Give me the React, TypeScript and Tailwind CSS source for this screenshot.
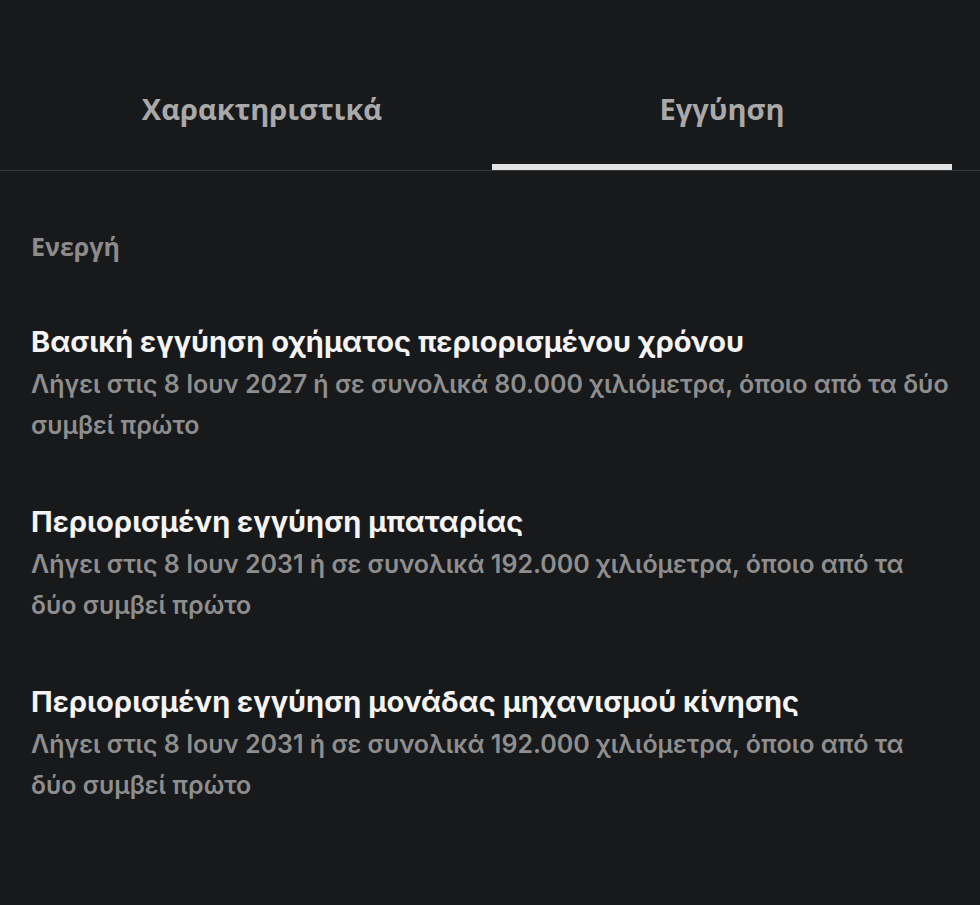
const items = [
  {
    title: 'Βασική εγγύηση οχήματος περιορισμένου χρόνου',
    detail: 'Λήγει στις 8 Ιουν 2027 ή σε συνολικά 80.000 χιλιόμετρα, όποιο από τα δύο συμβεί πρώτο',
  },
  {
    title: 'Περιορισμένη εγγύηση μπαταρίας',
    detail: 'Λήγει στις 8 Ιουν 2031 ή σε συνολικά 192.000 χιλιόμετρα, όποιο από τα δύο συμβεί πρώτο',
  },
  {
    title: 'Περιορισμένη εγγύηση μονάδας μηχανισμού κίνησης',
    detail: 'Λήγει στις 8 Ιουν 2031 ή σε συνολικά 192.000 χιλιόμετρα, όποιο από τα δύο συμβεί πρώτο',
  },
]

const tabs = [
  { label: 'Χαρακτηριστικά', active: false },
  { label: 'Εγγύηση', active: true },
]

export default function App() {
  return (
    <div className="min-h-[905px] w-full bg-[#18191b] font-['Inter',sans-serif]">
      <div className="border-b border-[#37383a] pl-[32px] pt-[40px]">
        <div className="flex">
          {tabs.map(tab => (
            <div
              key={tab.label}
              className={`flex h-[130px] w-[460px] items-center justify-center border-b-[6px] pt-[14px] font-['Open_Sans',sans-serif] text-[29px] font-bold text-[#a9a9aa] ${
                tab.active ? 'border-[#e3e3e3]' : 'border-transparent'
              }`}
            >
              {tab.label}
            </div>
          ))}
        </div>
      </div>

      <div className="px-[31px] pt-[55px]">
        <p className="font-['Open_Sans',sans-serif] text-[25px] font-bold leading-[40px] text-[#8c8c8d]">Ενεργή</p>
        <div className="mt-[54px] flex flex-col gap-[54px]">
          {items.map(item => (
            <div key={item.title}>
              <h3 className="text-[29px] font-bold leading-[44px] text-[#f4f4f4]">{item.title}</h3>
              <p className="text-[25px] font-semibold leading-[41px] text-[#8e8e8f]">{item.detail}</p>
            </div>
          ))}
        </div>
      </div>
    </div>
  )
}
